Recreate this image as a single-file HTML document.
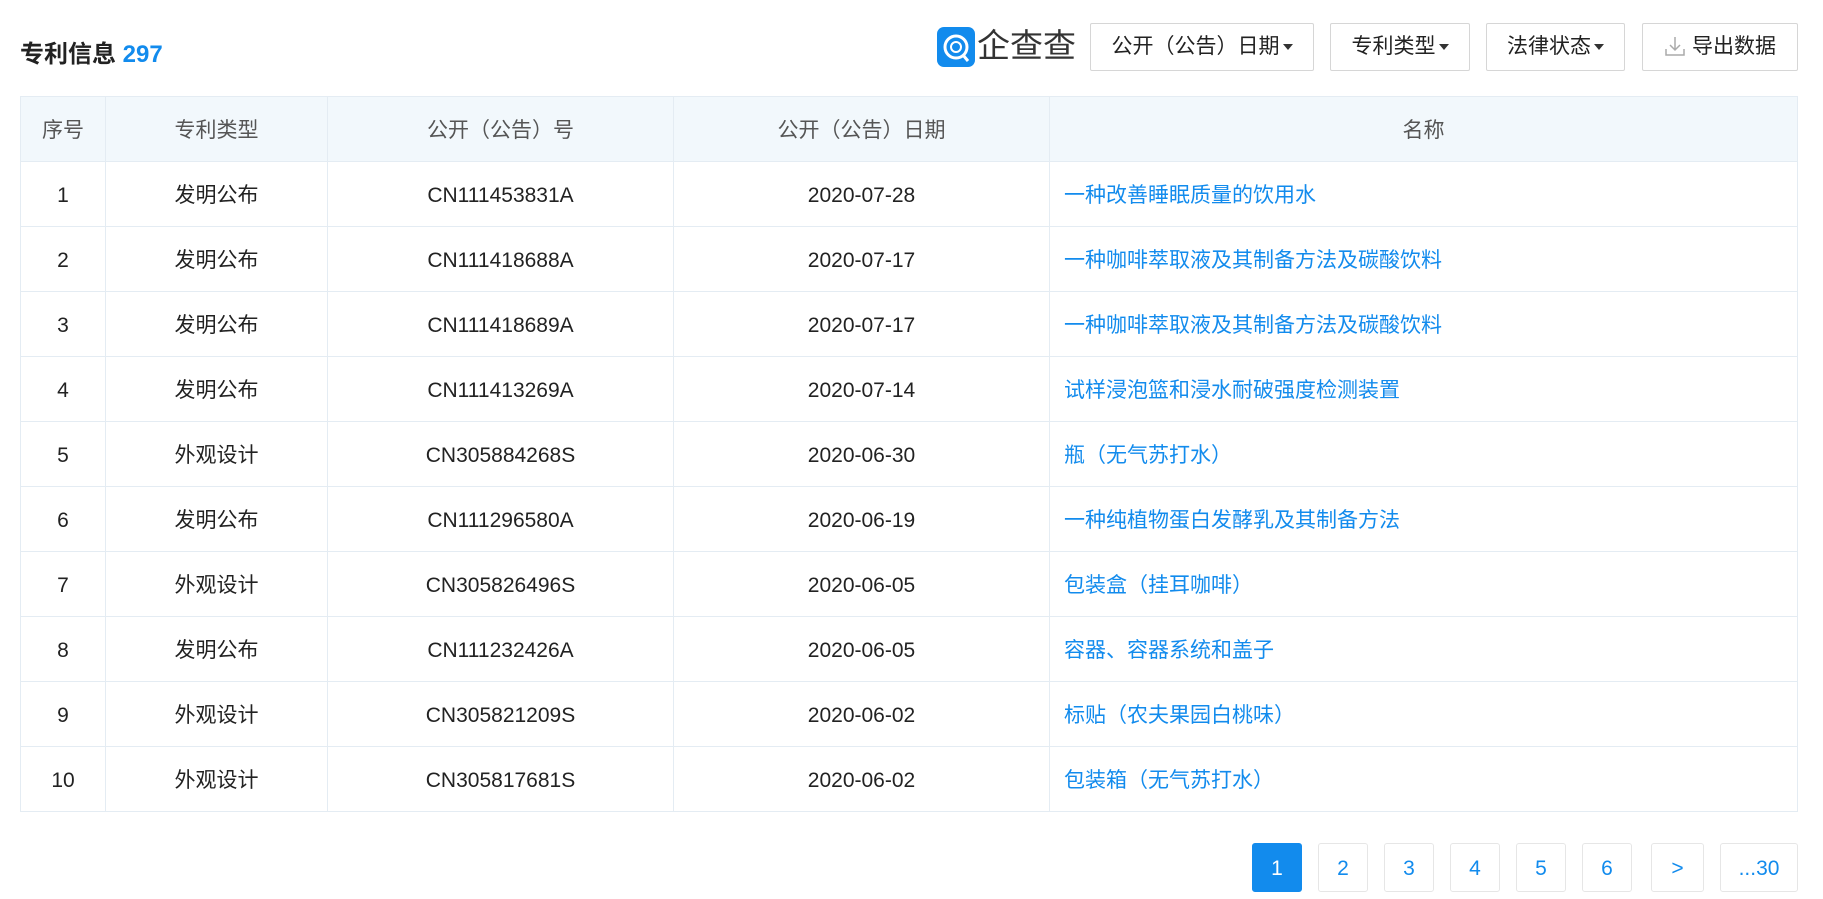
<!DOCTYPE html>
<html><head><meta charset="utf-8"><style>
body{margin:0;background:#fff;font-family:"Liberation Sans","Noto Sans CJK SC",sans-serif;width:1823px;height:899px;overflow:hidden;position:relative;color:#222}
.title{position:absolute;left:20px;top:34px;font-size:24px;font-weight:bold;color:#222}
.title span{color:#128bed}
.btn{position:absolute;top:23px;height:48px;border:1px solid #d6d6d6;border-radius:2px;box-sizing:border-box;font-size:21px;line-height:46px;text-align:center;color:#222;background:#fff}
.caret{display:inline-block;width:0;height:0;border-left:5px solid transparent;border-right:5px solid transparent;border-top:6px solid #333;vertical-align:middle;margin-left:3px}
table{position:absolute;left:20px;top:96px;width:1778px;border-collapse:collapse;font-size:21px}
td,th{border:1px solid #e4ecf3;height:64px;text-align:center;font-weight:normal;padding:0}
th{background:#f2f8fc;color:#555}
td.n{text-align:left;padding-left:14px;color:#128bed}
td:nth-child(1),td:nth-child(3),td:nth-child(4){padding-top:3px;height:61px}
.pg{position:absolute;top:843px;height:49px;border:1px solid #e6e6e6;box-sizing:border-box;border-radius:3px;font-size:21px;line-height:49px;text-align:center;color:#128bed;background:#fff}
.pg.a{background:#128bed;color:#fff;border-color:#128bed}
</style></head><body>
<div class="title">专利信息 <span>297</span></div>
<div style="position:absolute;left:937px;top:27px;width:38px;height:40px;background:#128bed;border-radius:7px">
<svg width="38" height="40" viewBox="0 0 38 40"><circle cx="19" cy="20" r="11" fill="none" stroke="#fff" stroke-width="3"/><circle cx="19" cy="20" r="5" fill="none" stroke="#fff" stroke-width="2"/><path d="M26 28 L31 34" stroke="#fff" stroke-width="3"/></svg></div>
<div style="position:absolute;left:977px;top:26px;font-size:33px;line-height:40px;color:#333">企查查</div>
<div class="btn" style="left:1090px;width:224px">公开（公告）日期<span class="caret"></span></div>
<div class="btn" style="left:1330px;width:140px">专利类型<span class="caret"></span></div>
<div class="btn" style="left:1486px;width:139px">法律状态<span class="caret"></span></div>
<div class="btn" style="left:1642px;width:156px"><svg width="22" height="22" viewBox="0 0 22 22" style="vertical-align:-4px;margin-right:6px"><path d="M11 2v13M6 10l5 5 5-5M2 14v6h18v-6" fill="none" stroke="#aaa" stroke-width="1.5"/></svg>导出数据</div>
<table>
<tr><th style="width:84px">序号</th><th style="width:221px">专利类型</th><th style="width:345px">公开（公告）号</th><th style="width:375px">公开（公告）日期</th><th>名称</th></tr>
<tr><td>1</td><td>发明公布</td><td>CN111453831A</td><td>2020-07-28</td><td class="n">一种改善睡眠质量的饮用水</td></tr>
<tr><td>2</td><td>发明公布</td><td>CN111418688A</td><td>2020-07-17</td><td class="n">一种咖啡萃取液及其制备方法及碳酸饮料</td></tr>
<tr><td>3</td><td>发明公布</td><td>CN111418689A</td><td>2020-07-17</td><td class="n">一种咖啡萃取液及其制备方法及碳酸饮料</td></tr>
<tr><td>4</td><td>发明公布</td><td>CN111413269A</td><td>2020-07-14</td><td class="n">试样浸泡篮和浸水耐破强度检测装置</td></tr>
<tr><td>5</td><td>外观设计</td><td>CN305884268S</td><td>2020-06-30</td><td class="n">瓶（无气苏打水）</td></tr>
<tr><td>6</td><td>发明公布</td><td>CN111296580A</td><td>2020-06-19</td><td class="n">一种纯植物蛋白发酵乳及其制备方法</td></tr>
<tr><td>7</td><td>外观设计</td><td>CN305826496S</td><td>2020-06-05</td><td class="n">包装盒（挂耳咖啡）</td></tr>
<tr><td>8</td><td>发明公布</td><td>CN111232426A</td><td>2020-06-05</td><td class="n">容器、容器系统和盖子</td></tr>
<tr><td>9</td><td>外观设计</td><td>CN305821209S</td><td>2020-06-02</td><td class="n">标贴（农夫果园白桃味）</td></tr>
<tr><td>10</td><td>外观设计</td><td>CN305817681S</td><td>2020-06-02</td><td class="n">包装箱（无气苏打水）</td></tr>
</table>
<div class="pg a" style="left:1252px;width:50px">1</div>
<div class="pg" style="left:1318px;width:50px">2</div>
<div class="pg" style="left:1384px;width:50px">3</div>
<div class="pg" style="left:1450px;width:50px">4</div>
<div class="pg" style="left:1516px;width:50px">5</div>
<div class="pg" style="left:1582px;width:50px">6</div>
<div class="pg" style="left:1651px;width:53px">&gt;</div>
<div class="pg" style="left:1720px;width:78px">...30</div>
</body></html>
